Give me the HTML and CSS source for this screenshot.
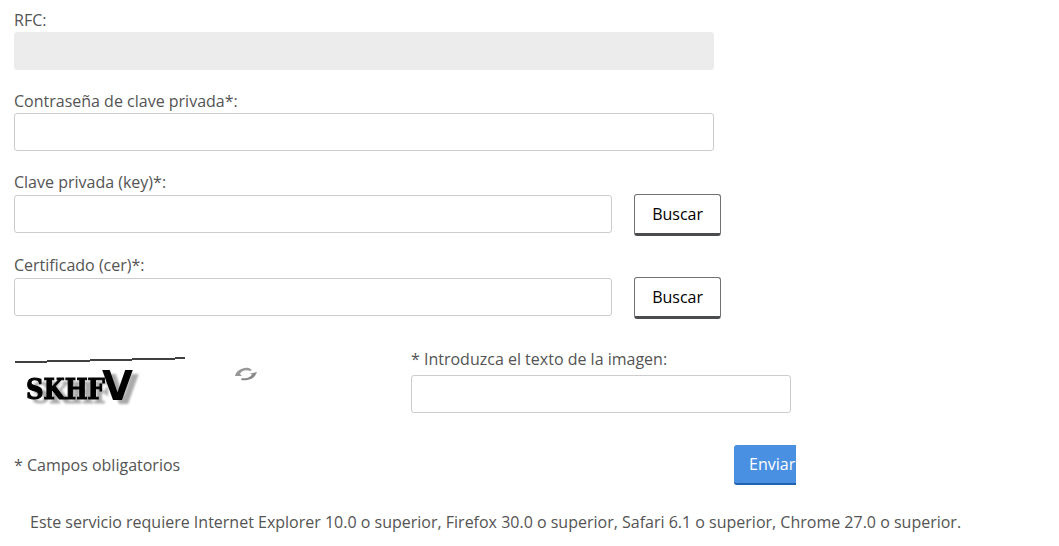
FILE: index.html
```html
<!DOCTYPE html>
<html lang="es">
<head>
  <meta charset="UTF-8">
  <meta name="viewport" content="width=device-width, initial-scale=1.0">
  <title>Acceso con e.firma</title>
  <link rel="stylesheet" href="styles.css">
</head>
<body>
  <form class="login-form">
    <div class="form-group">
      <label for="rfc">RFC:</label>
      <input type="text" id="rfc" class="form-control" disabled>
    </div>

    <div class="form-group">
      <label for="password">Contraseña de clave privada*:</label>
      <input type="password" id="password" class="form-control">
    </div>

    <div class="form-group file-group">
      <label for="key">Clave privada (key)*:</label>
      <div class="file-row">
        <input type="text" id="key" class="form-control">
        <button type="button" class="btn btn-default">Buscar</button>
      </div>
    </div>

    <div class="form-group file-group">
      <label for="cer">Certificado (cer)*:</label>
      <div class="file-row">
        <input type="text" id="cer" class="form-control">
        <button type="button" class="btn btn-default">Buscar</button>
      </div>
    </div>

    <div class="captcha-row">
      <div class="captcha-image">
        <svg width="172" height="66" viewBox="0 0 172 66" role="img" aria-label="Captcha">
          <path d="M1 15H33M33 14H76M76 13H118M118 12H161M161 11H171" stroke="#404040" stroke-width="2"/>
          <g class="captcha-text">
            <text class="captcha-slab" x="12" y="52">SKHF</text>
            <text class="captcha-sans" x="88" y="53">V</text>
          </g>
        </svg>
        <button type="button" class="btn-refresh" aria-label="Cambiar imagen">
          <svg width="24" height="14" viewBox="0 0 24 14">
            <path d="M1 9C2 4 8 0 15 1L18 3L16 4C12 2 7 4 6 7L8 9Z" fill="#999"/>
            <path d="M23 5L22 7C20 12 14 14 7 13L8 11C13 12 17 10 18 7L15 7Z" fill="#888"/>
          </svg>
        </button>
      </div>
      <div class="captcha-field">
        <label for="captcha">* Introduzca el texto de la imagen:</label>
        <input type="text" id="captcha" class="form-control">
      </div>
    </div>

    <div class="actions">
      <span>* Campos obligatorios</span>
      <div class="submit-wrap">
        <button type="submit" class="btn btn-primary">Enviar</button>
      </div>
    </div>
  </form>

  <p class="browser-note">Este servicio requiere Internet Explorer 10.0 o superior, Firefox 30.0 o superior, Safari 6.1 o superior, Chrome 27.0 o superior.</p>
</body>
</html>
```
FILE: styles.css
```css
* {
  box-sizing: border-box;
}
body {
  font-family: "Open Sans", sans-serif;
  font-size: 16px;
  line-height: 24px;
  color: #545454;
  background-color: #fff;
  margin: 0;
  padding: 8px 14px;
}
.login-form {
  max-width: 782px;
}
.form-group {
  max-width: 700px;
  margin-bottom: 19px;
}
.file-group {
  max-width: 707px;
  margin-bottom: 17px;
}
label {
  display: block;
}
.form-control {
  display: block;
  width: 100%;
  height: 38px;
  padding: 6px 12px;
  font: inherit;
  color: #545454;
  background-color: #fff;
  border: 1px solid #ccc;
  border-radius: 3px;
}
.form-control:disabled {
  background-color: #ececec;
  border-color: #ececec;
}
.file-row {
  display: flex;
  align-items: center;
  gap: 22px;
}
.file-row .form-control {
  flex: 1;
  min-width: 0;
  margin-bottom: 2px;
}
.btn {
  font: inherit;
  border-radius: 3px;
  cursor: pointer;
}
.btn-default {
  height: 42px;
  padding: 0 17px;
  color: #000;
  background-color: #fff;
  border: 1px solid #6f7271;
  border-bottom: 3px solid #4a4c4f;
}
.captcha-row {
  display: flex;
  justify-content: space-between;
  max-width: 777px;
  padding-top: 11px;
}
.captcha-image {
  display: flex;
  gap: 48px;
}
.captcha-image svg {
  display: block;
}
.captcha-text {
  fill: #000;
  font-weight: bold;
  filter: drop-shadow(6px 4px 1px #aaa);
}
.captcha-slab {
  font-family: "DejaVu Serif Condensed", "DejaVu Serif", serif;
  font-size: 27px;
  stroke: #000;
  stroke-width: 1px;
}
.captcha-sans {
  font-family: "DejaVu Sans", sans-serif;
  font-size: 40px;
}
.btn-refresh {
  align-self: flex-start;
  margin-top: 20px;
  padding: 0;
  border: 0;
  background: none;
  cursor: pointer;
}
.captcha-field {
  width: 380px;
}
.captcha-field label {
  margin-bottom: 4px;
}
.actions {
  display: flex;
  justify-content: space-between;
  align-items: center;
  margin-top: 32px;
}
.submit-wrap {
  width: 62px;
  overflow: hidden;
}
.btn-primary {
  display: block;
  height: 40px;
  padding: 0 15px;
  color: #fff;
  background-color: #4a90e2;
  border: 0;
  border-bottom: 2px solid #1f62b0;
}
.browser-note {
  margin: 25px 16px 0;
}
```
